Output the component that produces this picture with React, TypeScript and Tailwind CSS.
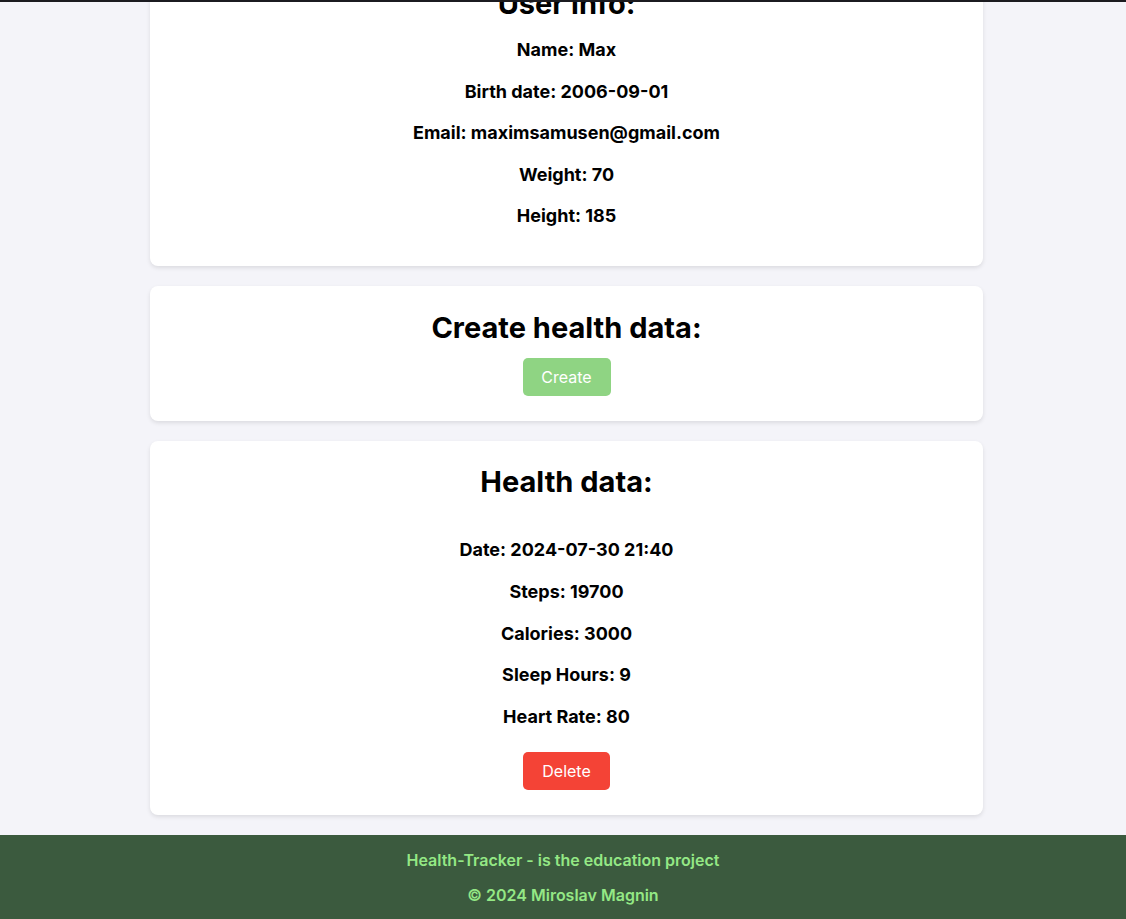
export default function App() {
  const user = [
    'Name: Max',
    'Birth date: 2006-09-01',
    'Email: maximsamusen@gmail.com',
    'Weight: 70',
    'Height: 185',
  ]
  const health = [
    'Date: 2024-07-30 21:40',
    'Steps: 19700',
    'Calories: 3000',
    'Sleep Hours: 9',
    'Heart Rate: 80',
  ]

  return (
    <div className="flex min-h-[919px] flex-col bg-[#f4f4f9] text-black font-['Inter',sans-serif]">
      <div className="h-[2px] bg-[#1b1b20]" />
      <div className="flex-1 overflow-hidden">
        <main className="-mt-[39px] flex flex-col gap-[20px] pl-[150px] pr-[143px] pb-[20px]">
          <section className="flex flex-col items-center rounded-lg bg-white pt-[25px] pb-[38px] shadow-[0_2px_4px_rgba(0,0,0,0.1)]">
            <h2 className="text-[29px] font-bold leading-[32px]">User info:</h2>
            <div className="mt-[18px] flex flex-col items-center gap-[17.5px]">
              {user.map((t) => (
                <p key={t} className="text-[18px] font-bold leading-[24px]">
                  {t}
                </p>
              ))}
            </div>
          </section>

          <section className="flex flex-col items-center rounded-lg bg-white pt-[26px] pb-[25px] shadow-[0_2px_4px_rgba(0,0,0,0.1)]">
            <h2 className="text-[29px] font-bold leading-[32px]">Create health data:</h2>
            <button className="mt-[14px] h-[38px] w-[88px] rounded-[5px] bg-[#8fd483] text-[16px] text-white">
              Create
            </button>
          </section>

          <section className="flex flex-col items-center rounded-lg bg-white pt-[25px] pb-[25px] shadow-[0_2px_4px_rgba(0,0,0,0.1)]">
            <h2 className="text-[29px] font-bold leading-[32px]">Health data:</h2>
            <div className="mt-[40px] flex flex-col items-center gap-[17.75px]">
              {health.map((t) => (
                <p key={t} className="text-[18px] font-bold leading-[24px]">
                  {t}
                </p>
              ))}
            </div>
            <button className="mt-[23px] h-[38px] w-[87px] rounded-[5px] bg-[#f44336] text-[16px] text-white">
              Delete
            </button>
          </section>
        </main>
      </div>
      <footer className="flex h-[84px] flex-col items-center bg-[#3b5a3e] pt-[15px] text-[16px] font-semibold leading-[20px] text-[#94e885]">
        <p>Health-Tracker - is the education project</p>
        <p className="mt-[15px]">© 2024 Miroslav Magnin</p>
      </footer>
    </div>
  )
}
